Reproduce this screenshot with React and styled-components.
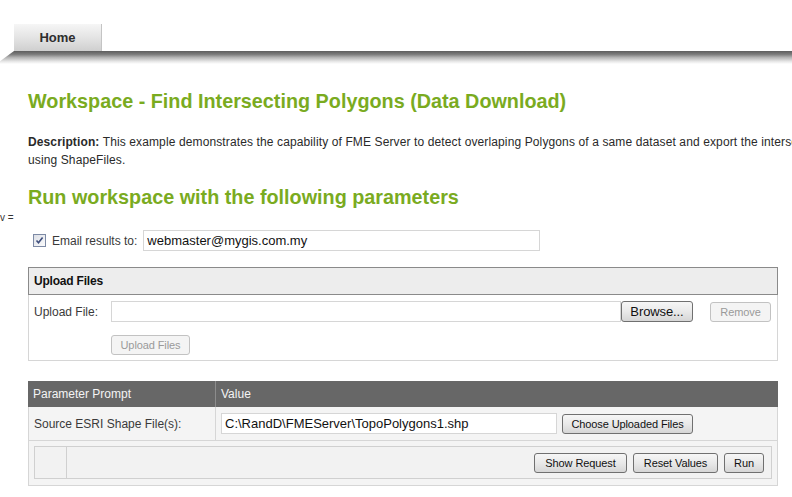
import React, { useState } from 'react';
import styled, { createGlobalStyle } from 'styled-components';

const GlobalStyle = createGlobalStyle`
  html, body {
    margin: 0;
    padding: 0;
    background: #fff;
    overflow: hidden;
  }
  body {
    font-family: 'Liberation Sans', Arial, sans-serif;
    color: #333;
  }
`;

const Page = styled.div`
  width: 792px;
  height: 497px;
  overflow: hidden;
`;

const Masthead = styled.header`
  padding-top: 24px;
`;

const Tab = styled.div`
  margin-left: 14px;
  width: 88px;
  height: 27px;
  box-sizing: border-box;
  border-right: 1px solid #c4c4c4;
  background: linear-gradient(#f6f6f6, #e4e4e4 50%, #cfcfcf);
  display: flex;
  align-items: center;
  justify-content: center;
  font-weight: 700;
  font-size: 13px;
  color: #2e2e2e;
  padding-bottom: 1px;
`;

const Rule = styled.div`
  height: 13px;
  background: linear-gradient(#5e5e5e, #7a7a7a 25%, #b4b4b4 50%, #e6e6e6 80%, #fff);
  clip-path: polygon(14px 0, 100% 0, 100% 100%, 0 100%, 0 78%);
`;

const Main = styled.main`
  padding-left: 28px;
  width: 750px;
`;

const Heading = styled.h1`
  margin: ${(p) => p.$top}px 0 0;
  font-size: 19.8px;
  line-height: 24px;
  font-weight: 700;
  color: #7aab1f;
  white-space: nowrap;
`;

const Description = styled.p`
  margin: 20px 0 0;
  font-size: 12px;
  line-height: 18px;
  letter-spacing: 0.12px;
  color: #2a2a2a;
  white-space: nowrap;
  b {
    font-weight: 700;
  }
`;

const Stray = styled.div`
  margin: 2px 0 0 -28px;
  font-size: 10px;
  line-height: 14px;
  color: #333;
`;

const EmailRow = styled.label`
  margin: 5px 0 0 5px;
  display: flex;
  align-items: center;
  gap: 6px;
  font-size: 12px;
  color: #3a3a3a;
`;

const Check = styled.span`
  width: 11px;
  height: 11px;
  border: 1px solid #7d8aa5;
  background: linear-gradient(135deg, #dcdfe6, #fbfbfc);
  display: flex;
  align-items: center;
  justify-content: center;
  svg {
    width: 9px;
    height: 9px;
  }
`;

const TextBox = styled.input`
  box-sizing: border-box;
  height: 21px;
  width: ${(p) => p.$width || 'auto'};
  flex: ${(p) => (p.$grow ? 1 : 'none')};
  border: 1px solid #d6d6d6;
  background: #fff;
  padding: 0 3px;
  font-family: 'Liberation Sans', Arial, sans-serif;
  font-size: 13px;
  color: #111;
  outline: none;
`;

const Panel = styled.section`
  margin-top: 16px;
  border: 1px solid #d6d6d6;
`;

const PanelHead = styled.div`
  height: 26px;
  margin: -1px -1px 0;
  border: 1px solid #8a8a8a;
  background: #ededed;
  display: flex;
  align-items: center;
  padding-left: 5px;
  font-size: 12px;
  font-weight: 700;
  color: #111;
  letter-spacing: -0.2px;
`;

const PanelBody = styled.div`
  padding: 6px 6px 5px 5px;
`;

const FileRow = styled.div`
  display: flex;
  align-items: center;
  font-size: 12px;
  color: #3a3a3a;
`;

const FieldLabel = styled.span`
  width: 77px;
  flex: none;
`;

const Button = styled.button`
  box-sizing: border-box;
  height: ${(p) => p.$h || 20}px;
  width: ${(p) => p.$w}px;
  margin-left: ${(p) => p.$gap || 0}px;
  padding: 0;
  flex: none;
  border: 1px solid ${(p) => (p.disabled ? '#c2c2c2' : '#707070')};
  border-radius: 3px;
  background: ${(p) =>
    p.disabled ? '#f4f4f4' : 'linear-gradient(#f6f6f6, #e9e9e9 50%, #d6d6d6)'};
  font-family: 'Liberation Sans', Arial, sans-serif;
  font-size: ${(p) => p.$size || 11}px;
  color: ${(p) => (p.disabled ? '#9a9a9a' : '#111')};
  letter-spacing: -0.1px;
`;

const UploadAction = styled.div`
  margin: 13px 0 0 77px;
`;

const ParamGrid = styled.section`
  margin-top: 20px;
  border: 1px solid #d6d6d6;
  display: grid;
  grid-template-columns: 186px 1fr;
`;

const HeadCell = styled.div`
  height: 26px;
  background: #676767;
  color: #f4f4f4;
  font-size: 12px;
  display: flex;
  align-items: center;
  padding-left: 5px;
  border-left: ${(p) => (p.$divider ? '1px solid #8c8c8c' : 'none')};
  margin: -1px ${(p) => (p.$divider ? '-1px' : '0')} 0 ${(p) => (p.$divider ? '0' : '-1px')};
`;

const Cell = styled.div`
  height: 33px;
  background: #f4f4f4;
  border-bottom: 1px solid #d6d6d6;
  border-left: ${(p) => (p.$divider ? '1px solid #d6d6d6' : 'none')};
  display: flex;
  align-items: center;
  gap: 5px;
  padding-left: 5px;
  font-size: 12px;
  color: #3a3a3a;
`;

const ActionBar = styled.div`
  grid-column: 1 / -1;
  background: #f4f4f4;
  padding: 5px 5px 6px;
`;

const ActionInner = styled.div`
  height: 31px;
  border: 1px solid #d0d0d0;
  background: #f2f2f2;
  display: flex;
  align-items: center;
  padding-right: 7px;
`;

const Spacer = styled.div`
  width: 31px;
  align-self: stretch;
  border-right: 1px solid #d0d0d0;
  margin-right: auto;
`;

const App = () => {
  const [email, setEmail] = useState('webmaster@mygis.com.my');
  const [source, setSource] = useState('C:\\RandD\\FMEServer\\TopoPolygons1.shp');

  return (
    <Page>
      <GlobalStyle />
      <Masthead>
        <Tab>Home</Tab>
        <Rule />
      </Masthead>
      <Main>
        <Heading $top={25}>Workspace - Find Intersecting Polygons (Data Download)</Heading>
        <Description>
          <b>Description:</b> This example demonstrates the capability of FME Server to detect
          overlaping Polygons of a same dataset and export the intersections
          <br />
          using ShapeFiles.
        </Description>
        <Heading $top={16}>Run workspace with the following parameters</Heading>
        <Stray>v =</Stray>
        <EmailRow>
          <Check>
            <svg viewBox="0 0 9 9">
              <path d="M1.5 4.5 L3.5 6.8 L7.6 1.6" fill="none" stroke="#3f4f7d" strokeWidth="1.6" />
            </svg>
          </Check>
          <span>Email results to:</span>
          <TextBox $width="397px" value={email} onChange={(e) => setEmail(e.target.value)} />
        </EmailRow>

        <Panel>
          <PanelHead>Upload Files</PanelHead>
          <PanelBody>
            <FileRow>
              <FieldLabel>Upload File:</FieldLabel>
              <TextBox $grow readOnly />
              <Button $w={72} $h={21} $size={13}>Browse...</Button>
              <Button $w={61} $gap={17} disabled>Remove</Button>
            </FileRow>
            <UploadAction>
              <Button $w={79} disabled>Upload Files</Button>
            </UploadAction>
          </PanelBody>
        </Panel>

        <ParamGrid>
          <HeadCell>Parameter Prompt</HeadCell>
          <HeadCell $divider>Value</HeadCell>
          <Cell>Source ESRI Shape File(s):</Cell>
          <Cell $divider>
            <TextBox $width="336px" value={source} onChange={(e) => setSource(e.target.value)} />
            <Button $w={131}>Choose Uploaded Files</Button>
          </Cell>
          <ActionBar>
            <ActionInner>
              <Spacer />
              <Button $w={93}>Show Request</Button>
              <Button $w={85} $gap={6}>Reset Values</Button>
              <Button $w={40} $gap={6}>Run</Button>
            </ActionInner>
          </ActionBar>
        </ParamGrid>
      </Main>
    </Page>
  );
};

export default App;
